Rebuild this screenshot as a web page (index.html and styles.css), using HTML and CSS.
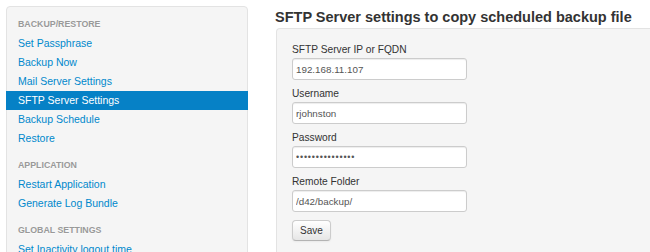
FILE: index.html
```html
<!DOCTYPE html>
<html lang="en">
<head>
    <meta charset="UTF-8">
    <title>Backup/Restore - SFTP Server Settings</title>
    <link rel="stylesheet" href="styles.css">
</head>
<body>
    <div class="layout">
        <div class="sidebar">
            <ul class="nav-list">
                <li class="nav-header">Backup/Restore</li>
                <li><a href="#">Set Passphrase</a></li>
                <li><a href="#">Backup Now</a></li>
                <li><a href="#">Mail Server Settings</a></li>
                <li class="active"><a href="#">SFTP Server Settings</a></li>
                <li><a href="#">Backup Schedule</a></li>
                <li><a href="#">Restore</a></li>
                <li class="nav-header">Application</li>
                <li><a href="#">Restart Application</a></li>
                <li><a href="#">Generate Log Bundle</a></li>
                <li class="nav-header">Global Settings</li>
                <li><a href="#">Set Inactivity logout time</a></li>
            </ul>
        </div>

        <div class="content">
            <h3>SFTP Server settings to copy scheduled backup file</h3>
            <form class="well">
                <label for="sftpHost">SFTP Server IP or FQDN</label>
                <input type="text" id="sftpHost" value="192.168.11.107">

                <label for="sftpUser">Username</label>
                <input type="text" id="sftpUser" value="rjohnston">

                <label for="sftpPass">Password</label>
                <input type="password" id="sftpPass" value="secretpassword1">

                <label for="sftpFolder">Remote Folder</label>
                <input type="text" id="sftpFolder" value="/d42/backup/">

                <button type="button" class="btn">Save</button>
            </form>
        </div>
    </div>
</body>
</html>
```

FILE: styles.css
```css
html, body {
    height: 100%;
    overflow: hidden;
}
body {
    margin: 0;
    padding: 6px 0 0 6px;
    font-family: "Liberation Sans", Arial, sans-serif;
    color: #333;
    background: #fff;
}
.layout {
    display: flex;
    gap: 28px;
}
.sidebar {
    flex: 0 0 242px;
    box-sizing: border-box;
    height: 400px;
    padding: 8px 0;
    background-color: #f5f5f5;
    border: 1px solid #e3e3e3;
    border-radius: 4px;
}
.nav-list {
    list-style: none;
    margin: 0;
    padding: 0;
}
.nav-list li {
    line-height: 19px;
}
.nav-header {
    padding-left: 11px;
    font-size: 8.8px;
    font-weight: bold;
    color: #999;
    text-transform: uppercase;
    text-shadow: 0 1px 0 rgba(255, 255, 255, 0.5);
}
li + .nav-header {
    margin-top: 8px;
}
.nav-list a {
    display: block;
    padding-left: 11px;
    font-size: 10.5px;
    color: #0088cc;
    text-decoration: none;
}
.nav-list .active a {
    margin: 0 -1px;
    padding-left: 12px;
    color: #fff;
    background-color: #0681c6;
}
.content {
    flex: 1;
}
h3 {
    margin: 0;
    margin-left: -1px;
    font-size: 14.5px;
    line-height: 22px;
    font-weight: bold;
    color: #333;
}
.well {
    margin: 0;
    height: 300px;
    padding: 13px 15px;
    background-color: #f5f5f5;
    border: 1px solid #e3e3e3;
    border-right: 0;
    border-radius: 4px 0 0 4px;
}
label {
    display: block;
    font-size: 10.2px;
    line-height: 15px;
    margin-bottom: 1px;
    color: #333;
}
input {
    display: block;
    box-sizing: border-box;
    width: 175px;
    height: 22px;
    margin: 0 0 6px;
    padding: 0 3px;
    font-family: "Liberation Sans", Arial, sans-serif;
    font-size: 9.8px;
    color: #555;
    background: #fff;
    border: 1px solid #ccc;
    border-radius: 3px;
    box-shadow: inset 0 1px 1px rgba(0, 0, 0, 0.075);
    outline: none;
}
input[type="password"] {
    font-size: 9px;
    letter-spacing: 0.8px;
}
.btn {
    display: block;
    margin-top: 8px;
    height: 21px;
    padding: 0 7px;
    font-family: "Liberation Sans", Arial, sans-serif;
    font-size: 10px;
    color: #333;
    background-color: #f5f5f5;
    background-image: linear-gradient(to bottom, #ffffff, #e6e6e6);
    border: 1px solid #cccccc;
    border-bottom-color: #b3b3b3;
    border-radius: 4px;
    box-shadow: inset 0 1px 0 rgba(255, 255, 255, 0.2), 0 1px 2px rgba(0, 0, 0, 0.05);
}
```
